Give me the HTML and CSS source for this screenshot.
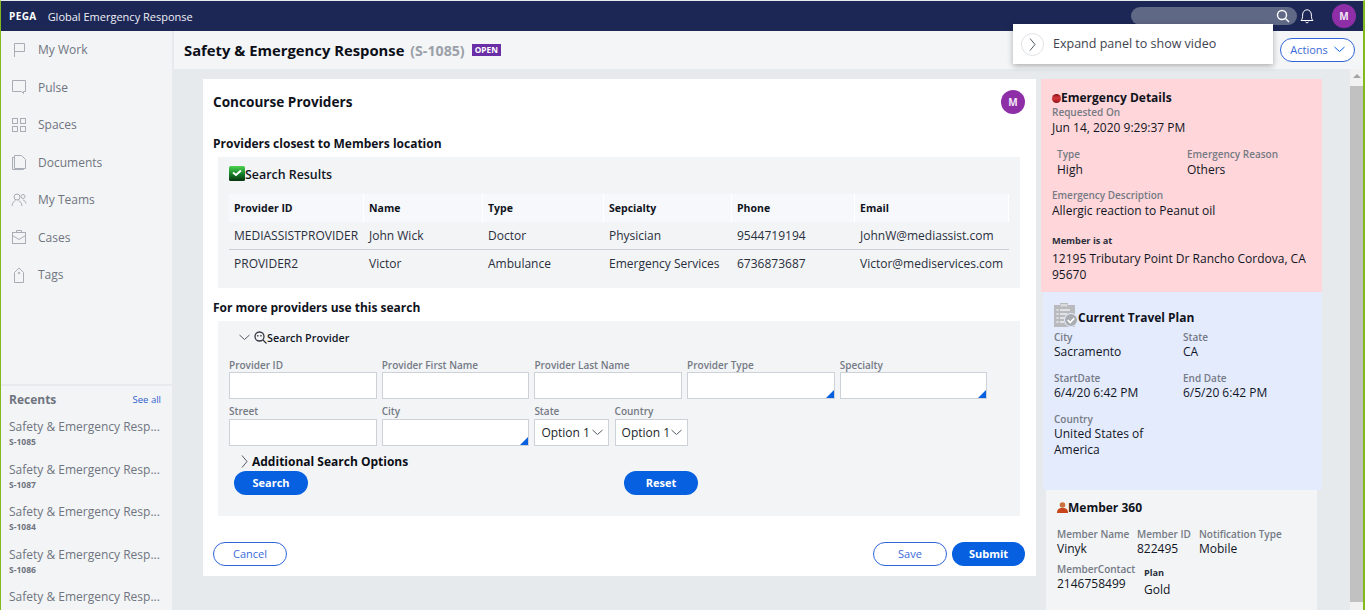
FILE: index.html
```html
<!DOCTYPE html>
<html lang="en">
<head>
<meta charset="utf-8">
<title>Global Emergency Response</title>
<link rel="stylesheet" href="styles.css">
</head>
<body>
<div class="app">
  <header class="topbar">
    <span class="logo">PEGA</span>
    <span class="apptitle">Global Emergency Response</span>
    <div class="topright">
      <div class="search">
        <svg class="search-ic" width="14" height="14" viewBox="0 0 14 14" fill="none" stroke="#fff" stroke-width="1.4"><circle cx="6" cy="6" r="4.5"/><path d="M9.5 9.5L13 13"/></svg>
      </div>
      <svg class="bell" width="14" height="16" viewBox="0 0 14 16" fill="none" stroke="#fff" stroke-width="1"><path d="M1 12.5c1.5-1.5 1.6-3 1.6-5.500C2.600 4 4.500 1.800 7 1.800S11.400 4 11.400 7c0 2.500.1 4 1.600 5.500z"/><path d="M5.500 14c.4 1 2.600 1 3 0"/></svg>
      <span class="avatar">M</span>
    </div>
  </header>

  <div class="body">
    <nav class="sidebar">
      <ul class="nav">
        <li class="nav-item"><svg class="nav-ic" width="16" height="16" viewBox="0 0 16 16" fill="none" stroke="#a8adb5"><path d="M3.500 15V1.500h10v8h-10"/></svg>My Work</li>
        <li class="nav-item"><svg class="nav-ic" width="16" height="16" viewBox="0 0 16 16" fill="none" stroke="#a8adb5"><path d="M1.500 1.500h13v11h-2v2l-2-2h-9z"/></svg>Pulse</li>
        <li class="nav-item"><svg class="nav-ic" width="16" height="16" viewBox="0 0 16 16" fill="none" stroke="#a8adb5"><rect x="1.500" y="1.500" width="5" height="5"/><rect x="9.500" y="1.500" width="5" height="5"/><rect x="1.500" y="9.500" width="5" height="5"/><rect x="9.500" y="9.500" width="5" height="5"/></svg>Spaces</li>
        <li class="nav-item"><svg class="nav-ic" width="16" height="16" viewBox="0 0 16 16" fill="none" stroke="#a8adb5"><path d="M3.500 14.500V1.500h7l4 4v9z"/><path d="M3.500 3.500h-2v12h11v-1"/></svg>Documents</li>
        <li class="nav-item"><svg class="nav-ic" width="16" height="16" viewBox="0 0 16 16" fill="none" stroke="#a8adb5"><circle cx="6" cy="5" r="3"/><circle cx="12" cy="4.500" r="2"/><path d="M1 14c.5-3.500 2-5 3.500-5.500M7.500 8.500c1.500.5 3 2 3.500 5.500M12 8c1.500.3 2.500 1.500 3 3.500"/></svg>My Teams</li>
        <li class="nav-item"><svg class="nav-ic" width="16" height="16" viewBox="0 0 16 16" fill="none" stroke="#a8adb5"><rect x="1.500" y="3.500" width="13" height="11"/><path d="M5.500 3.500v-2h5v2M1.500 6.500l6.500 4 6.500-4"/></svg>Cases</li>
        <li class="nav-item"><svg class="nav-ic" width="16" height="16" viewBox="0 0 16 16" fill="none" stroke="#a8adb5"><path d="M3.500 15.500V5.500L8 1l4.500 4.500v10z"/><circle cx="8" cy="6" r=".8"/></svg>Tags</li>
      </ul>
      <section class="recents">
        <div class="recents-head"><span class="recents-title">Recents</span><span class="see-all">See all</span></div>
        <div class="recent"><div class="recent-name">Safety &amp; Emergency Resp...</div><div class="recent-id">S-1085</div></div>
        <div class="recent"><div class="recent-name">Safety &amp; Emergency Resp...</div><div class="recent-id">S-1087</div></div>
        <div class="recent"><div class="recent-name">Safety &amp; Emergency Resp...</div><div class="recent-id">S-1084</div></div>
        <div class="recent"><div class="recent-name">Safety &amp; Emergency Resp...</div><div class="recent-id">S-1086</div></div>
        <div class="recent"><div class="recent-name">Safety &amp; Emergency Resp...</div></div>
      </section>
    </nav>

    <main class="main">
      <div class="casebar">
        <h1 class="casetitle">Safety &amp; Emergency Response <span class="caseid">(S-1085)</span></h1>
        <span class="badge">OPEN</span>
        <button class="btn btn-outline btn-actions">Actions
          <svg width="11" height="7" viewBox="0 0 11 7" fill="none" stroke="#0b5fe0"><path d="M.5 1l5 4.500 5-4.500"/></svg>
        </button>
      </div>
      <div class="content">
        <div class="card">
          <div class="card-head"><h2 class="card-title">Concourse Providers</h2><span class="avatar">M</span></div>
          <h3 class="sec">Providers closest to Members location</h3>
          <section class="panel panel-results">
            <div class="panel-title">
              <svg class="ic-check" width="16" height="15" viewBox="0 0 16 15"><defs><linearGradient id="gchk" x1="0" y1="0" x2="0" y2="1"><stop offset="0" stop-color="#4fd34f"/><stop offset=".5" stop-color="#17862a"/><stop offset="1" stop-color="#07320f"/></linearGradient></defs><rect width="16" height="15" rx="1.500" fill="url(#gchk)"/><path d="M4 6.500l3 2.500 5-4.500" fill="none" stroke="#fff" stroke-width="2"/></svg>
              Search Results
            </div>
            <table class="tbl">
              <thead><tr><th class="c1">Provider ID</th><th class="c2">Name</th><th class="c3">Type</th><th class="c4">Sepcialty</th><th class="c5">Phone</th><th class="c6">Email</th></tr></thead>
              <tbody>
                <tr><td>MEDIASSISTPROVIDER</td><td>John Wick</td><td>Doctor</td><td>Physician</td><td>9544719194</td><td>JohnW@mediassist.com</td></tr>
                <tr><td>PROVIDER2</td><td>Victor</td><td>Ambulance</td><td>Emergency Services</td><td>6736873687</td><td>Victor@mediservices.com</td></tr>
              </tbody>
            </table>
          </section>
          <h3 class="sec sec-more">For more providers use this search</h3>
          <section class="panel panel-search">
            <div class="search-head">
              <svg class="chev-down" width="11" height="7" viewBox="0 0 11 7" fill="none" stroke="#555b66"><path d="M.5 1l5 4.500 5-4.500"/></svg>
              <svg width="13" height="13" viewBox="0 0 13 13" fill="none" stroke="#333842" stroke-width="1.300"><circle cx="5.500" cy="5.500" r="4.500"/><path d="M9 9l3.500 3.500"/><path d="M3.800 4v1.500M7 4v1.500" /></svg>
              <span class="search-title">Search Provider</span>
            </div>
            <div class="form-row">
              <label class="field"><span class="lbl">Provider ID</span><span class="input"></span></label>
              <label class="field"><span class="lbl">Provider First Name</span><span class="input"></span></label>
              <label class="field"><span class="lbl">Provider Last Name</span><span class="input"></span></label>
              <label class="field"><span class="lbl">Provider Type</span><span class="input input-ac"></span></label>
              <label class="field"><span class="lbl">Specialty</span><span class="input input-ac"></span></label>
            </div>
            <div class="form-row form-row-2">
              <label class="field"><span class="lbl">Street</span><span class="input"></span></label>
              <label class="field"><span class="lbl">City</span><span class="input input-ac"></span></label>
              <label class="field field-sel-a"><span class="lbl">State</span><span class="input select">Option 1<svg width="11" height="7" viewBox="0 0 11 7" fill="none" stroke="#555b66"><path d="M.5 1l5 4.500 5-4.500"/></svg></span></label>
              <label class="field field-sel-b"><span class="lbl">Country</span><span class="input select">Option 1<svg width="11" height="7" viewBox="0 0 11 7" fill="none" stroke="#555b66"><path d="M.5 1l5 4.500 5-4.500"/></svg></span></label>
            </div>
            <div class="addl">
              <svg width="7" height="13" viewBox="0 0 7 13" fill="none" stroke="#555b66"><path d="M1 .5l5 6-5 6"/></svg>
              <span>Additional Search Options</span>
            </div>
            <div class="search-actions">
              <button class="btn btn-solid">Search</button>
              <button class="btn btn-solid">Reset</button>
            </div>
          </section>
          <div class="card-foot">
            <button class="btn btn-outline">Cancel</button>
            <span class="foot-right">
              <button class="btn btn-outline">Save</button>
              <button class="btn btn-solid btn-submit">Submit</button>
            </span>
          </div>
        </div>

        <aside class="side">
          <section class="box box-pink">
            <div class="box-title"><svg width="9" height="9" viewBox="0 0 9 9"><defs><linearGradient id="gred" x1="0" y1="0" x2="0" y2="1"><stop offset="0" stop-color="#7d1015"/><stop offset=".45" stop-color="#d9363c"/><stop offset="1" stop-color="#8d1217"/></linearGradient></defs><circle cx="4.500" cy="4.500" r="4.500" fill="url(#gred)"/></svg>Emergency Details</div>
            <div class="kv"><div class="k">Requested On</div><div class="v">Jun 14, 2020 9:29:37 PM</div></div>
            <div class="two two-indent">
              <div class="kv"><div class="k">Type</div><div class="v">High</div></div>
              <div class="kv"><div class="k">Emergency Reason</div><div class="v">Others</div></div>
            </div>
            <div class="kv kv-desc"><div class="k">Emergency Description</div><div class="v">Allergic reaction to Peanut oil</div></div>
            <div class="kv kv-at"><div class="k k-dark">Member is at</div><div class="v v-addr">12195 Tributary Point Dr Rancho Cordova, CA 95670</div></div>
          </section>
          <section class="box box-blue">
            <div class="box-title box-title-t"><svg width="24" height="24" viewBox="0 0 24 24"><path d="M0 2h6V0h8v2h7v22H0z" fill="#b8babd"/><rect x="6.500" y="1" width="7" height="2.500" fill="#d8dadd"/><path d="M2.500 7h2M6 7h10M2.500 11h2M6 11h7M2.500 15h2M6 15h5M2.500 19h2M6 19h4" stroke="#eef0f4" stroke-width="1.300"/><circle cx="17" cy="17" r="7" fill="#e4ebfd"/><circle cx="17" cy="17" r="6" fill="#a9acb0"/><path d="M13.800 17l2.400 2.500 4-4.200" fill="none" stroke="#fff" stroke-width="1.600"/></svg>Current Travel Plan</div>
            <div class="two two-t">
              <div class="kv kv-t"><div class="k">City</div><div class="v">Sacramento</div></div>
              <div class="kv kv-t"><div class="k">State</div><div class="v">CA</div></div>
            </div>
            <div class="two two-t">
              <div class="kv kv-t"><div class="k">StartDate</div><div class="v">6/4/20 6:42 PM</div></div>
              <div class="kv kv-t"><div class="k">End Date</div><div class="v">6/5/20 6:42 PM</div></div>
            </div>
            <div class="kv kv-t kv-country"><div class="k">Country</div><div class="v">United States of America</div></div>
          </section>
          <section class="box box-gray">
            <div class="box-title box-title-m"><svg width="11" height="12" viewBox="0 0 11 12"><circle cx="5.500" cy="3" r="2.800" fill="#c9723f"/><path d="M0 11c0-4 2-5 5.500-5S11 7 11 11z" fill="#c8451c"/></svg>Member 360</div>
            <div class="m-row">
              <div class="kv kv-t m1"><div class="k">Member Name</div><div class="v">Vinyk</div></div>
              <div class="kv kv-t m2"><div class="k">Member ID</div><div class="v">822495</div></div>
              <div class="kv kv-t"><div class="k">Notification Type</div><div class="v">Mobile</div></div>
            </div>
            <div class="m-row m-row-2">
              <div class="kv kv-t m-contact"><div class="k">MemberContact</div><div class="v">2146758499</div></div>
              <div class="kv kv-plan"><div class="k k-dark">Plan</div><div class="v">Gold</div></div>
            </div>
          </section>
        </aside>

        <div class="scrollbar"><span class="sb-up"></span><span class="sb-thumb"></span></div>
      </div>
    </main>
  </div>

  <div class="popover">
    <span class="pop-btn"><svg width="7" height="13" viewBox="0 0 7 13" fill="none" stroke="#555b66"><path d="M1 .5l5 6-5 6"/></svg></span>
    <span class="pop-text">Expand panel to show video</span>
  </div>
</div>
</body>
</html>
```

FILE: styles.css
```css
* { box-sizing: border-box; }
html, body { margin: 0; height: 100%; overflow: hidden; }
body { font-family: "Open Sans", "Liberation Sans", sans-serif; font-size: 12px; color: #11151f; background: #e6eaed; }
h1, h2, h3, ul { margin: 0; padding: 0; list-style: none; }

.app { position: relative; height: 610px; width: 1365px; display: flex; flex-direction: column; overflow: hidden; border-left: 1px solid #83b81f; border-right: 2px solid #83b81f; border-top: 1px solid #e6eaed; }

.topbar { flex: none; height: 30px; background: #1c2755; color: #fff; display: flex; align-items: center; padding-left: 8px; }
.logo { font-size: 10px; font-weight: 700; letter-spacing: .4px; margin-right: 11px; }
.apptitle { font-size: 11px; color: #eef0f6; }
.topright { margin-left: auto; display: flex; align-items: center; padding-right: 7px; }
.search { width: 166px; height: 18px; border-radius: 9px; background: #5f6885; display: flex; align-items: center; justify-content: flex-end; padding-right: 7px; }
.bell { margin: 0 18px 0 3px; }
.avatar { width: 24px; height: 24px; border-radius: 50%; background: #8e2fa8; color: #f3e8f7; font-size: 10px; font-weight: 700; display: flex; align-items: center; justify-content: center; flex: none; }

.body { flex: 1; display: flex; min-height: 0; }
.sidebar { width: 171px; flex: none; background: #f3f4f6; display: flex; flex-direction: column; overflow: hidden; }
.nav { flex: 1; }
.nav-item { height: 37.5px; display: flex; align-items: center; gap: 11px; padding-left: 10px; font-size: 12px; color: #6f7580; }
.nav-ic { flex: none; }
.recents { flex: none; height: 226px; border-top: 2px solid #e8ebee; padding: 4px 10px 0 8px; overflow: hidden; }
.recents-head { display: flex; justify-content: space-between; align-items: center; height: 18px; margin-bottom: 10px; }
.recents-title { font-size: 12px; font-weight: 700; color: #6f7580; }
.see-all { font-size: 9.5px; color: #2e5fd0; padding-right: 1px; }
.recent { height: 42.5px; }
.recent-name { font-size: 12px; line-height: 17px; color: #6f7580; white-space: nowrap; }
.recent-id { font-size: 8.5px; font-weight: 700; line-height: 14px; color: #6f7580; }

.main { flex: 1; min-width: 0; display: flex; flex-direction: column; padding-left: 2px; }
.casebar { flex: none; height: 38px; background: #f3f5f7; display: flex; align-items: center; padding: 0 8px 0 10px; }
.casetitle { font-size: 14.8px; font-weight: 700; color: #0c0f17; }
.caseid { color: #9ba0a8; font-size: 14.2px; font-weight: 700; margin-left: 2px; }
.badge { margin-left: 7px; background: #6a2fa6; color: #fff; font-size: 8.3px; font-weight: 700; padding: 0 3px; line-height: 12px; }
.btn { font-family: inherit; height: 24px; width: 74px; border-radius: 12px; font-size: 11px; padding: 0 0 1px; display: inline-flex; align-items: center; justify-content: center; gap: 6px; }
.btn-outline { background: #fff; border: 1px solid #2f64d8; color: #3a6ad6; }
.btn-solid { background: #0660e0; border: 0; color: #fff; font-weight: 700; }
.btn-actions { margin-left: auto; width: 75px; }

.content { flex: 1; min-height: 0; display: flex; align-items: flex-start; padding: 10px 0 0 29px; position: relative; }
.card { width: 833px; flex: none; background: #fff; padding: 11px 11px 10px 10px; }
.card-head { display: flex; justify-content: space-between; align-items: center; height: 24px; }
.card-title { font-size: 13.6px; font-weight: 700; color: #10131c; padding-bottom: 2px; }
.sec { font-size: 12px; font-weight: 700; line-height: 16px; margin-top: 22px; color: #10131c; }
.sec-more { margin-top: 12px; }
.panel { background: #f2f4f6; margin: 5px 5px 0; }
.panel-results { height: 131px; padding: 9px 11px 10px; }
.panel-title { display: flex; align-items: flex-start; height: 28px; font-size: 12.4px; font-weight: 600; color: #11151f; line-height: 18px; }
.ic-check { flex: none; }
.tbl { width: 780px; border-collapse: separate; border-spacing: 0; table-layout: fixed; font-size: 12px; color: #2a2f3c; }
.tbl th { text-align: left; font-size: 10.5px; font-weight: 700; color: #10131c; height: 28px; background: #f6f8fb; padding: 0 0 0 5px; border-right: 1px solid #fff; }
.tbl td { height: 28px; padding: 0 0 1px 5px; white-space: nowrap; }
.tbl tbody tr:first-child td { border-bottom: 1px solid #ccd0d6; }
.c1 { width: 135px; } .c2 { width: 119px; } .c3 { width: 121px; } .c4 { width: 128px; } .c5 { width: 123px; } .c6 { width: 154px; }

.panel-search { margin-top: 5px; height: 195px; padding: 7px 0 0 11px; }
.search-head { display: flex; align-items: center; height: 18px; padding-left: 10px; margin-bottom: 12px; }
.chev-down { margin-right: 4px; }
.search-title { font-size: 10.8px; font-weight: 600; color: #11151f; }
.form-row { display: flex; gap: 5.2px; }
.form-row-2 { margin-top: 5px; }
.form-row-2 .lbl { line-height: 15px; }
.field { width: 147.5px; display: flex; flex-direction: column; }
.lbl { font-size: 10px; line-height: 14px; font-weight: 600; color: #757a85; white-space: nowrap; }
.input { height: 27px; background: #fff; border: 1px solid #cdd2d9; position: relative; font-size: 12px; color: #1a1f2b; }
.input-ac::after { content: ""; position: absolute; right: 0; bottom: 0; border: 4px solid transparent; border-right-color: #0660e0; border-bottom-color: #0660e0; }
.field-sel-a { width: 75px; }
.field-sel-b { width: 73.5px; }
.select { display: flex; align-items: center; justify-content: space-between; padding: 0 5px 0 6px; }
.addl { display: flex; align-items: center; gap: 4px; height: 16px; margin-top: 7px; padding-left: 12px; font-size: 12px; font-weight: 700; color: #0c0f17; }
.search-actions { display: flex; gap: 316px; margin: 2px 0 0 5px; }
.card-foot { display: flex; justify-content: space-between; margin-top: 26px; }
.foot-right { display: flex; gap: 5px; }
.btn-submit { width: 73px; }

.side { width: 281px; flex: none; margin-left: 5px; display: flex; flex-direction: column; align-items: flex-end; }
.box { font-size: 12px; }
.box-title { display: flex; align-items: center; font-size: 12px; font-weight: 700; line-height: 14px; color: #10131c; }
.k { font-size: 10px; line-height: 14px; font-weight: 600; color: #757a85; }
.k-dark { color: #2a2f3c; font-size: 9.2px; font-weight: 700; }
.v { line-height: 16px; color: #11151f; }
.box-pink { width: 281px; background: #ffd6d9; height: 213px; padding: 12px 10px 0 11px; }
.box-pink .kv > .v { margin-top: 1px; }
.two { display: grid; grid-template-columns: 130px 1fr; }
.two-indent { margin-top: 11px; padding-left: 5px; }
.kv-desc { margin-top: 10px; }
.kv-at { margin-top: 15px; }
.box-pink .kv > .v-addr { margin-top: 3px; }
.box-blue { width: 279px; background: #e4ebfd; height: 198px; padding: 11px 11px 0 11px; }
.box-title-t { height: 27px; align-items: flex-end; padding-bottom: 5px; }
.box-title-t svg { align-self: flex-start; flex: none; }
.two-t { grid-template-columns: 129px 1fr; }
.two-t + .two-t { margin-top: 11px; }
.kv-country { margin-top: 11px; width: 120px; }
.box-gray { width: 271px; background: #f2f4f6; height: 130px; padding: 11px 11px 0 11px; margin-right: 5px; }
.box-title-m svg { flex: none; }
.m-row { display: flex; margin-top: 12px; }
.m-row-2 { margin-top: 5px; }
.m1 { width: 80px; }
.m2 { width: 62px; }
.m-contact { width: 87px; }
.kv-plan { margin-top: 4px; }
.kv-plan .v { margin-top: 2px; }

.scrollbar { position: absolute; right: 0; top: 0; bottom: 0; width: 13px; background: #f1f1f1; display: flex; flex-direction: column; }
.sb-up { height: 17px; flex: none; position: relative; }
.sb-up::after { content: ""; position: absolute; left: 3px; top: 5px; border: 4px solid transparent; border-bottom-color: #a3a3a3; border-top: 0; }
.sb-thumb { height: 516px; background: #c1c1c1; flex: none; }

.popover { position: absolute; left: 1012px; top: 23px; width: 260px; height: 40px; background: #fff; box-shadow: 0 2px 6px rgba(0,0,0,.3); display: flex; align-items: center; padding-left: 8px; gap: 9px; font-size: 12.5px; color: #3e434e; }
.pop-btn { width: 23px; height: 23px; border-radius: 50%; border: 1px solid #dfe2e6; display: flex; align-items: center; justify-content: center; flex: none; }
.pop-text { padding-bottom: 2px; }
```
